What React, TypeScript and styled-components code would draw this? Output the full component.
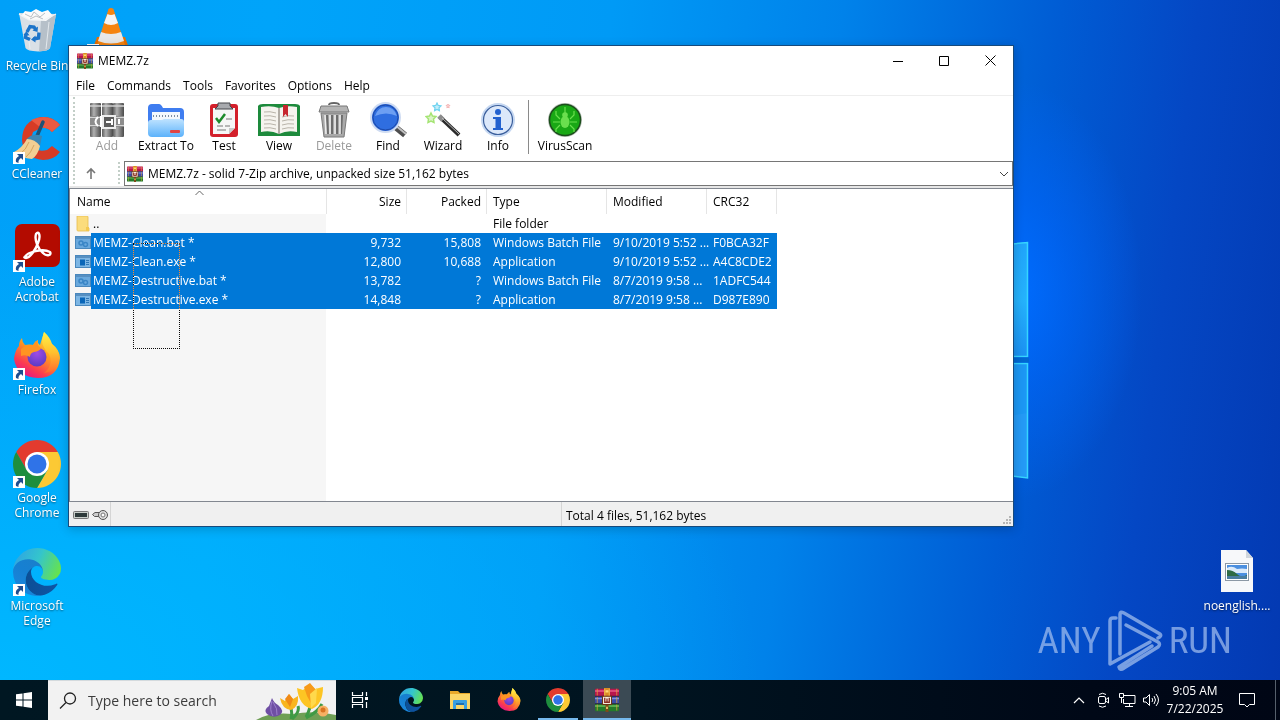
import React from "react";
import styled, { createGlobalStyle, css } from "styled-components";

const GlobalStyle = createGlobalStyle`
  * { box-sizing: border-box; }
  body { margin: 0; overflow: hidden; }
  body, button, input, select, table {
    font-family: "Open Sans", "Noto Sans", sans-serif;
    font-size: 12px;
    line-height: 15px;
    color: #000;
  }
  button { border: 0; padding: 0; background: none; cursor: default; }
  svg { display: block; flex: none; }
`;

/* ---------- Desktop ---------- */

const Screen = styled.div`
  height: 100vh;
  display: flex;
  flex-direction: column;
`;

const Desktop = styled.main`
  position: relative;
  flex: 1;
  min-height: 0;
  overflow: hidden;
  background:
    radial-gradient(ellipse 130px 210px at 1012px 290px, #006cff 0%, #0066faa0 45%, #0060f000 100%),
    radial-gradient(ellipse 760px 460px at 0 100%, #00b7ff 0%, #00b7ff00 100%),
    linear-gradient(97deg, #00a0f8 0%, #00a4fa 20%, #009af6 45%, #0082ea 62%, #005cd4 78%, #0447c4 88%, #0339b2 100%);
`;

const Wallpaper = styled.svg`
  position: absolute;
  left: 980px;
  top: 236px;
`;

const IconGrid = styled.div`
  display: grid;
  grid-auto-flow: column;
  grid-template-rows: repeat(6, 108px);
  grid-template-columns: 74px 74px;
  width: max-content;
  padding-top: 8px;
`;

const Shortcut = styled.button<{ $loose?: boolean }>`
  display: flex;
  flex-direction: column;
  align-items: center;
  gap: 2px;
  width: 74px;
  color: #fff;
  text-shadow: 0 1px 2px #0008;
  ${(p) => p.$loose && css`position: absolute; right: 6px; top: 548px;`}
`;

const ShortcutArt = styled.span`
  position: relative;
  display: block;
  width: 48px;
  height: 48px;
`;

const ArrowBadge = styled.svg`
  position: absolute;
  left: 0;
  bottom: 0;
`;

const Watermark = styled.div`
  position: absolute;
  right: 48px;
  bottom: 8px;
  display: flex;
  align-items: center;
  gap: 6px;
  color: #a9c4f0b0;
  font-family: "Roboto Condensed", Roboto, sans-serif;
  font-size: 37px;
  line-height: 62px;
`;

/* ---------- Window ---------- */

const Window = styled.section`
  position: absolute;
  left: 68px;
  top: 45px;
  width: 946px;
  height: 482px;
  display: flex;
  flex-direction: column;
  background: #fff;
  border: 1px solid #174a7c;
  box-shadow: 0 2px 10px #0003;
`;

const TitleBar = styled.header`
  display: flex;
  align-items: center;
  height: 29px;
  padding-left: 8px;
  gap: 5px;
`;

const Title = styled.h1`
  flex: 1;
  margin: 0;
  font-size: 12px;
  font-weight: 400;
`;

const CaptionButtons = styled.div`
  display: flex;
`;

const CaptionButton = styled.button`
  display: flex;
  align-items: center;
  justify-content: center;
  width: 46px;
  height: 29px;
`;

const MenuBar = styled.nav`
  display: flex;
  height: 21px;
  padding-left: 1px;
  border-bottom: 1px solid #eee;
`;

const MenuButton = styled.button`
  padding: 0 6px;
`;

const ToolRow = styled.div`
  display: flex;
  height: 64px;
`;

const Gripper = styled.span`
  width: 2px;
  margin: 1px 4px 0 4px;
  border-left: 2px dotted #c3cfc8;
`;

const ToolButton = styled.button<{ $width: number; $off?: boolean }>`
  display: flex;
  flex-direction: column;
  align-items: center;
  width: ${(p) => p.$width}px;
  padding-top: 6px;
  color: ${(p) => (p.$off ? "#9a9a9a" : "#000")};
  line-height: 16px;
`;

const ToolDivider = styled.span`
  width: 1px;
  margin: 4px 6px 6px 3px;
  background: #8a8a8a;
`;

const AddressRow = styled.div`
  display: flex;
  height: 28px;
  padding-top: 1px;
`;

const UpButton = styled.button`
  display: flex;
  align-items: center;
  justify-content: center;
  width: 24px;
  margin-right: 11px;
`;

const AddressBox = styled.label`
  position: relative;
  display: flex;
  flex: 1;
  align-items: center;
  gap: 5px;
  height: 25px;
  padding: 0 3px 0 2px;
  border: 1px solid #767676;
`;

const AddressSelect = styled.select`
  flex: 1;
  padding: 0;
  border: 0;
  background: none;
  appearance: none;
`;

const FileArea = styled.div`
  position: relative;
  flex: 1;
  min-height: 0;
  border-top: 1px solid #828790;
  border-bottom: 1px solid #828790;
  border-left: 1px solid #828790;
  background: linear-gradient(to right, #f6f6f6 256px, #fff 256px);
  box-shadow: 0 -2px 0 #e6e6e6;
`;

const HeaderBand = styled.div`
  height: 25px;
  margin-bottom: -25px;
  background: #fff;
`;

const FileTable = styled.table`
  position: relative;
  width: 707px;
  table-layout: fixed;
  border-spacing: 0;
`;

const HeadCell = styled.th<{ $width: number; $right?: boolean }>`
  position: relative;
  width: ${(p) => p.$width}px;
  height: 25px;
  padding: 0 5px 0 6px;
  border-right: 1px solid #e5e5e5;
  font-weight: 400;
  text-align: ${(p) => (p.$right ? "right" : "left")};
  &:first-child { padding-left: 7px; }
`;

const SortMark = styled.svg`
  position: absolute;
  left: 125px;
  top: 1px;
`;

const Row = styled.tr<{ $selected?: boolean }>`
  height: 19px;
  ${(p) =>
    p.$selected &&
    css`
      color: #fff;
      td:not(:first-child) { background: #0078d7; }
      td:first-child span { background: #0078d7; }
    `}
`;

const Cell = styled.td<{ $right?: boolean }>`
  padding: ${(p) => (p.$right ? "0 6px 0 0" : "0 0 0 6px")};
  white-space: nowrap;
  text-align: ${(p) => (p.$right ? "right" : "left")};
`;

const NameCell = styled.td`
  padding: 0;
`;

const NameBox = styled.div`
  display: flex;
  align-items: center;
  height: 19px;
  padding-left: 5px;
`;

const FileName = styled.span`
  flex: 1;
  padding-left: 2px;
  line-height: 19px;
`;

const Marquee = styled.div`
  position: absolute;
  left: 63px;
  top: 54px;
  width: 47px;
  height: 106px;
  border: 1px dotted #fff;
  mix-blend-mode: difference;
`;

const StatusBar = styled.footer`
  display: flex;
  height: 24px;
  background: #f0f0f0;
`;

const StatusPanel = styled.div<{ $width?: number }>`
  display: flex;
  align-items: center;
  gap: 3px;
  padding: 3px 4px 0;
  ${(p) => (p.$width ? css`width: ${p.$width}px; border-right: 1px solid #d5d5d5;` : css`flex: 1;`)}
`;

const SizeGrip = styled.svg`
  align-self: flex-end;
`;

/* ---------- Taskbar ---------- */

const Taskbar = styled.footer`
  display: flex;
  height: 40px;
  background: linear-gradient(to right, #001722 0%, #001420 50%, #000817 85%, #000615 100%);
`;

const TaskButton = styled.button<{ $state?: "open" | "active" }>`
  position: relative;
  display: flex;
  align-items: center;
  justify-content: center;
  width: 48px;
  height: 40px;
  margin-right: 1px;
  background: ${(p) => (p.$state === "active" ? "#3b4a54" : "none")};
  &::after {
    content: "";
    position: absolute;
    bottom: 0;
    left: ${(p) => (p.$state === "active" ? 0 : 4)}px;
    right: ${(p) => (p.$state === "active" ? 0 : 4)}px;
    height: ${(p) => (p.$state ? 2 : 0)}px;
    background: #76b9ed;
  }
`;

const StartButton = styled.button`
  display: flex;
  align-items: center;
  justify-content: center;
  width: 48px;
`;

const SearchBox = styled.label`
  display: flex;
  align-items: center;
  width: 288px;
  padding-left: 11px;
  gap: 11px;
  background: #f2f2f2;
  border-top: 1px solid #d4dadd;
`;

const SearchInput = styled.input`
  flex: 1;
  min-width: 0;
  padding: 0;
  border: 0;
  background: none;
  font-size: 14px;
  line-height: 20px;
  outline: 0;
  &::placeholder { color: #3c3c3c; opacity: 1; }
`;

const SearchArt = styled.svg`
  align-self: flex-end;
`;

const TaskList = styled.div`
  display: flex;
  flex: 1;
  & > :first-child { margin-right: 3px; }
`;

const Tray = styled.div`
  display: flex;
  align-items: center;
  color: #fff;
`;

const TrayButton = styled.button<{ $wide?: boolean }>`
  display: flex;
  align-items: center;
  justify-content: center;
  width: ${(p) => (p.$wide ? 42 : 24)}px;
  height: 40px;
  color: #fff;
`;

const Clock = styled.time`
  width: 60px;
  margin: 0 1px 0 2px;
  text-align: center;
  line-height: 18px;
  white-space: nowrap;
`;

const ShowDesktop = styled.button`
  width: 5px;
  height: 40px;
  margin-left: 7px;
  border-left: 1px solid #56606c;
`;

/* ---------- Drawings ---------- */

type Size = { size: number };

const Archive = ({ size }: Size) => (
  <svg width={size} height={size} viewBox="0 0 32 32">
    <rect x="0" y="1" width="32" height="10" rx="1" fill="#b8174c" />
    <rect x="0" y="3" width="32" height="2" fill="#e85a86" />
    <rect x="0" y="11" width="32" height="10" rx="1" fill="#3a4ba6" />
    <rect x="0" y="13" width="32" height="2" fill="#7f90e4" />
    <rect x="0" y="21" width="32" height="10" rx="1" fill="#237a2a" />
    <rect x="0" y="23" width="32" height="2" fill="#69bd59" />
    <path d="M0 11h32M0 21h32" stroke="#2a1832" strokeWidth="1" />
    <path d="M3 1v9M29 1v9M3 12v8M29 12v8M3 22v8M29 22v8" stroke="#e0a63a" strokeWidth="1.200" opacity=".8" />
    <rect x="12" y="0" width="8" height="20" fill="#d98a24" />
    <path d="M13 1v18M19 1v18" stroke="#f7c65c" strokeWidth="1" />
    <rect x="14" y="20" width="4" height="12" fill="#7d4a18" />
    <rect x="10" y="11" width="12" height="11" fill="#f8efdf" stroke="#6b3413" strokeWidth="1.400" />
    <path d="M13 13v6h6v-6M16 14v5" fill="none" stroke="#8a2d22" strokeWidth="1.800" />
    <path d="M14 3h4v3h-4zM15 25h2v3h-2z" fill="#ffd878" />
  </svg>
);

const Recycle = () => (
  <svg width="48" height="48" viewBox="0 0 48 48">
    <path d="M6 5 43 6 37 40Q36 43 25 43.500 14 43 12.500 40Z" fill="#d9e0e6" />
    <path d="M28 12 43 6 37 40Q35 43 26 43.500Z" fill="#b6c0c9" />
    <path d="M8 8 12 3 18 4 23 1 29 4 35 2 40 8 33 13 16 12Z" fill="#fafafa" />
    <path d="m12 6 6 3 3-5 6 5 5-4M17 11l6-3 7 3" fill="none" stroke="#b9bfc4" />
    <path d="M6 6 16 12 31 12 43 6" fill="none" stroke="#eef3f6" strokeWidth="1.200" />
    <path d="m14 17 3 24M36 14l-3 27" stroke="#eef2f5" strokeWidth="1" opacity=".8" />
    <g fill="none" stroke="#1c74c9" strokeWidth="3.400">
      <path d="M14 24 17 18.500 21 19 23 22" />
      <path d="M26 24.500 25.500 30 20.500 31" />
      <path d="M17 31.500 12.500 29.500 13 26" />
    </g>
    <path d="m25 18.500-.5 5.500-5-1.500zM22.500 27.500v7l-4.500-3zM10.500 27l3-4 3 4.500z" fill="#1c74c9" />
  </svg>
);

const Vlc = () => (
  <svg width="48" height="48" viewBox="0 0 48 48">
    <path d="M10 29h28l5 14H5Z" fill="#e96f00" />
    <path d="M21.500 1Q24-1 26.500 1L38 37Q24 43 10 37Z" fill="#f58410" />
    <path d="M20.500 6Q24 8 27.500 6L31 15Q24 19 17 15Z" fill="#f4f4f4" />
    <path d="M14 24Q24 28 34 24L37 33Q24 38 11 33Z" fill="#e8e8e8" />
  </svg>
);

const CCleaner = () => (
  <svg width="48" height="48" viewBox="0 0 48 48">
    <path d="M47 9 39 16Q34 11 28 12L20 16 18 23 20 32Q26 36 34 34L39 30 47 36Q41 44 30 44 10 42 9 24 9 5 28 1 40 0 47 9Z" fill="#d63b26" />
    <path d="M47 9 39 16Q34 11 28 12L18 4Q36-4 47 9Z" fill="#ea5a42" />
    <path d="M30 6 24 20" stroke="#1e5276" strokeWidth="3.500" strokeLinecap="round" />
    <path d="M13 24Q19 16 29 20L27 30 15 26Z" fill="#3a86b4" />
    <path d="M14 23Q22 23 27 30 25 39 19 43 8 42 1 36 9 32 14 23Z" fill="#f2cf93" />
    <path d="M16 26Q13 34 7 38M21 29Q18 37 13 41" stroke="#d6a55f" fill="none" />
  </svg>
);

const Acrobat = () => (
  <svg width="48" height="48" viewBox="0 0 48 48">
    <rect x="2" y="0" width="45" height="43" rx="7" fill="#b30b00" />
    <path d="M12 33C14 28 30 24 37 28 39 31 34 33 30 29 26 26 21 17 23 10 26 6 28 12 25 19 23 25 17 34 13 34 11 34 11 33 12 33Z" fill="none" stroke="#fff" strokeWidth="2.400" strokeLinejoin="round" />
  </svg>
);

const Firefox = ({ size }: Size) => (
  <svg width={size} height={size} viewBox="0 0 48 48">
    <defs>
      <linearGradient id="fxBody" x1=".8" y1=".1" x2=".25" y2="1">
        <stop offset="0" stopColor="#ffe23b" />
        <stop offset=".4" stopColor="#ff9a1f" />
        <stop offset=".75" stopColor="#fb3c50" />
        <stop offset="1" stopColor="#e5128a" />
      </linearGradient>
      <linearGradient id="fxTail" x1="0" y1="0" x2="0" y2="1">
        <stop offset="0" stopColor="#fff24a" />
        <stop offset=".5" stopColor="#ffc02d" />
        <stop offset="1" stopColor="#ff6a30" />
      </linearGradient>
      <radialGradient id="fxGlobe" cx=".5" cy=".3" r=".7">
        <stop offset="0" stopColor="#a04be6" />
        <stop offset="1" stopColor="#5a3bc4" />
      </radialGradient>
    </defs>
    <path d="M9 6Q9 10 12 13 16 12 20 13 22 9 25 8 24 11 27 13L31 0Q36 5 38 11 47 18 47 26 45 46 25 46 4 45 1 27 2 18 6 14 6 9 9 6Z" fill="url(#fxBody)" />
    <path d="M31 0Q37 5 39 12 48 20 46 29 42 41 31 41 41 33 36 22 29 15 29 8Z" fill="url(#fxTail)" />
    <circle cx="24" cy="25" r="9.500" fill="url(#fxGlobe)" />
    <path d="M8 17Q15 12 20 13 22 9 25 8 23 13 28 16 27 19 21 20 17 21 17 25 13 22 8 24Z" fill="#ff9422" />
  </svg>
);

const Chrome = ({ size }: Size) => (
  <svg width={size} height={size} viewBox="2 2 44 44">
    <path d="M4.950 13A22 22 0 0 1 43.050 13H24L14.470 29.500Z" fill="#e33b2e" />
    <path d="M43.050 13A22 22 0 0 1 24 46L33.530 29.500 24 13Z" fill="#fcc934" />
    <path d="M24 46A22 22 0 0 1 4.950 13L14.470 29.500 33.530 29.500Z" fill="#1e8e3e" />
    <circle cx="24" cy="24" r="11" fill="#fff" />
    <circle cx="24" cy="24" r="8.700" fill="#2f73e8" />
  </svg>
);

const Edge = ({ size }: Size) => (
  <svg width={size} height={size} viewBox="0 0 256 256">
    <defs>
      <linearGradient id="edgeDeep" x1="0" y1=".5" x2="1" y2=".5">
        <stop offset="0" stopColor="#0c4f96" />
        <stop offset="1" stopColor="#0f55a5" />
      </linearGradient>
      <linearGradient id="edgeMid" x1=".9" y1="0" x2=".3" y2="1">
        <stop offset="0" stopColor="#1b7fcb" />
        <stop offset=".5" stopColor="#1680d2" />
        <stop offset="1" stopColor="#1a86dc" />
      </linearGradient>
      <linearGradient id="edgeTop" x1="0" y1=".3" x2="1" y2=".6">
        <stop offset="0" stopColor="#2fa4e4" />
        <stop offset=".5" stopColor="#34c5cc" />
        <stop offset="1" stopColor="#66e24f" />
      </linearGradient>
    </defs>
    <g transform="translate(-4.630 -4.920)">
      <path fill="url(#edgeMid)" d="M110.340 246.340A79.200 79.200 0 0187.600 225a80.720 80.720 0 0129.530-120c3.120-1.470 8.450-4.130 15.540-4a32.350 32.350 0 0125.690 13 31.880 31.880 0 016.360 18.660c0-.21 24.460-79.600-80-79.600-43.900 0-80 41.660-80 78.210a130.150 130.150 0 0012.110 56 128 128 0 00156.380 67.110 75.550 75.550 0 01-62.780-8z" />
      <path fill="url(#edgeDeep)" d="M235.680 195.460a93.730 93.730 0 01-10.540 4.710 101.870 101.870 0 01-35.900 6.460c-47.320 0-88.540-32.550-88.540-74.320A31.480 31.480 0 01117.130 105A80.720 80.720 0 0087.600 225a79.200 79.200 0 0022.740 21.340c18 12 42 15 62.780 8l1.310-.44a128.340 128.340 0 0066.600-52.800 4 4 0 00-5.320-5.640z" />
      <path fill="url(#edgeTop)" d="M156.940 153.780c-.81 1.050-3.300 2.500-3.300 5.660 0 2.610 1.700 5.120 4.720 7.230 14.380 10 41.490 8.680 41.560 8.680a59.560 59.560 0 0030.270-8.350A61.380 61.380 0 00260.630 115c.26-22.410-8-37.310-11.340-43.910C228.090 29.760 182.350 4.920 132.610 4.920A128 128 0 004.630 131.200c.48-36.540 36.800-66.050 80-66.050 3.500 0 23.460.34 42 10.070 16.340 8.580 24.900 18.940 30.850 29.210 6.180 10.670 7.280 24.150 7.280 29.520s-2.740 13.330-7.800 19.830z" />
    </g>
  </svg>
);

const PictureFile = () => (
  <svg width="48" height="48" viewBox="0 0 48 48">
    <path d="M8 2h25l7 8v34H8Z" fill="#f7f8fa" />
    <path d="M33 2v8h7Z" fill="#cfd5dc" />
    <rect x="12.500" y="15.500" width="23" height="17" fill="#fff" stroke="#8c98a5" />
    <rect x="14" y="17" width="20" height="14" fill="#4b8fe0" />
    <path d="M14 20q5-3 10 1 5-1 10 0v4H14Z" fill="#dbeafa" />
    <path d="M14 22q6 0 10 4t10 1v2H14Z" fill="#2f6b45" />
    <path d="M14 28h20v3H14Z" fill="#4a7d9f" />
  </svg>
);

const LinkArrow = () => (
  <ArrowBadge width="12" height="12" viewBox="0 0 12 12">
    <rect width="12" height="12" fill="#fff" />
    <path d="M4 2h6v6L8 6Q5 8 5.500 11L3 10Q2 6 6 4Z" fill="#1f4e8f" />
  </ArrowBadge>
);

const AddIcon = () => (
  <svg width="36" height="36" viewBox="0 0 36 36">
    <defs>
      <linearGradient id="book" x1="0" y1="0" x2="1" y2="0">
        <stop offset="0" stopColor="#5d5d5d" />
        <stop offset=".35" stopColor="#b0b0b0" />
        <stop offset="1" stopColor="#4a4a4a" />
      </linearGradient>
    </defs>
    {[1, 13, 24].map((x) => (
      <g key={x}>
        <rect x={x} y="1" width="11" height="34" rx="1" fill="url(#book)" />
        <path d={`M${x} 4h11`} stroke="#d0d0d0" strokeWidth="1.500" />
      </g>
    ))}
    <rect x="1" y="14" width="34" height="11" fill="#8d8d8d" />
    <path d="M1 15.500h34M1 23.500h34" stroke="#d4d4d4" />
    <rect x="14" y="14" width="12" height="12" fill="#5d5d5d" stroke="#eee" strokeWidth="2" />
    <path d="M9 15q-5 5 0 9M12 14v11M17 20h6M23 17v6M30 17v5" stroke="#fff" strokeWidth="2" fill="none" />
  </svg>
);

const ExtractIcon = () => (
  <svg width="38" height="36" viewBox="0 0 38 36">
    <defs>
      <linearGradient id="folder" x1="0" y1="0" x2="0" y2="1">
        <stop offset="0" stopColor="#bfe3ff" />
        <stop offset="1" stopColor="#5cb2fb" />
      </linearGradient>
    </defs>
    <path d="M1 6q0-4 4-4h7q2 0 4 4h17q4 0 4 4v14H1Z" fill="#3f7df0" />
    <path d="M5 10h28v10H5Z" fill="#f4f8fd" />
    <path d="M6 14h26" stroke="#7e8da1" strokeWidth="2" strokeDasharray="1 2" />
    <path d="M1 21q0-3 3-3h10q2 0 3-1h17q3 0 3 3v11q0 4-4 4H5q-4 0-4-4Z" fill="url(#folder)" />
    <rect x="23" y="28" width="10" height="3" rx="1" fill="#e04444" />
  </svg>
);

const TestIcon = () => (
  <svg width="36" height="36" viewBox="0 0 36 36">
    <rect x="4" y="2" width="28" height="33" rx="3" fill="#d3202b" />
    <path d="M7 6h22v20l-6 6H7Z" fill="#f6f6f6" />
    <path d="m29 26-6 6v-6z" fill="#c9c9c9" />
    <path d="M12 1h12v3l3 3H9l3-3Z" fill="#a8aaae" stroke="#44474b" strokeWidth="1" />
    <path d="m10 16 3 4 6-8" fill="none" stroke="#1c8a2b" strokeWidth="2.500" />
    <path d="M20 17h6M11 24h6M19 24h5M11 28h9" stroke="#777" strokeWidth="1.200" />
  </svg>
);

const ViewIcon = () => (
  <svg width="44" height="36" viewBox="0 0 44 36">
    <path d="M1 4q1-2 5-2h32q4 0 5 2v30H1Z" fill="#1d8a3c" />
    <path d="M4 5q10-2 18 1 8-3 18-1v25q-10-2-18 2-8-4-18-2Z" fill="#f5f3ee" />
    <path d="M22 6v26" stroke="#9a958c" strokeWidth="1.500" />
    <path d="M7 10q6-1 12 1M7 14q6-1 12 1M7 18q6-1 12 1M7 22q6-1 12 1M7 26q6-1 12 1M25 15q6-2 12-1M25 19q6-2 12-1M25 23q6-2 12-1M25 27q6-2 12-1" stroke="#b9b4aa" fill="none" />
    <path d="M26 3h5v12l-2.500-3-2.500 3Z" fill="#c6262e" />
  </svg>
);

const DeleteIcon = () => (
  <svg width="36" height="36" viewBox="0 0 36 36">
    <path d="M13 3q0-2 5-2t5 2" fill="none" stroke="#666" strokeWidth="2" />
    <path d="M5 4h26l2 6H3Z" fill="#b4b4b4" stroke="#777" />
    <path d="M5 11h26l-3 24H8Z" fill="#a9a9a9" stroke="#7a7a7a" />
    <path d="m11 13 1 19M16 13v19M21 13v19M26 13l-1 19" stroke="#6d6d6d" strokeWidth="2" />
    <path d="m9 13 1 19M14 13v19M19 13v19M24 13v19" stroke="#efefef" strokeWidth="1.500" />
  </svg>
);

const FindIcon = () => (
  <svg width="38" height="36" viewBox="0 0 38 36">
    <path d="m25 24 11 9" stroke="#4e4e4e" strokeWidth="6" />
    <path d="m26 23 11 9" stroke="#c1c1c1" strokeWidth="2" />
    <circle cx="16.500" cy="15.500" r="14.500" fill="#2c66d8" stroke="#cfdcf2" strokeWidth="2" />
    <circle cx="16.500" cy="15.500" r="12.500" fill="#2f6ee0" stroke="#1d4aa8" />
    <path d="M6 14q3-9 11-9t11 9q-11-5-22 0Z" fill="#6d9ff2" />
  </svg>
);

const Star = ({ x, y, r, color }: { x: number; y: number; r: number; color: string }) => (
  <path
    d="M0-10 3-4 10-3 5 2 6 9 0 6-6 9-5 2-10-3-3-4Z"
    transform={`translate(${x} ${y}) scale(${r / 10})`}
    fill={color}
    fillOpacity=".4"
    stroke={color}
    strokeWidth="3"
  />
);

const WizardIcon = () => (
  <svg width="36" height="36" viewBox="0 0 36 36">
    <path d="m15 15 19 18" stroke="#2b2b2b" strokeWidth="4" />
    <path d="m14 14 4 4" stroke="#8c8c8c" strokeWidth="5" />
    <path d="m17 16 17 16" stroke="#b8b8b8" strokeWidth="1" />
    <Star x={12} y={5} r={4} color="#6fd3f0" />
    <Star x={6} y={16} r={5} color="#a5e474" />
    <Star x={23} y={4} r={2} color="#f09a9a" />
  </svg>
);

const InfoIcon = () => (
  <svg width="36" height="36" viewBox="0 0 36 36">
    <circle cx="18" cy="18" r="17" fill="#c6d8f2" />
    <circle cx="18" cy="18" r="14.500" fill="#dce8fa" stroke="#3b5f9c" strokeWidth="1.200" />
    <circle cx="18" cy="10" r="3" fill="#2361cf" />
    <path d="M13 15h8v11h2v2H13v-2h2.500v-9H13Z" fill="#2361cf" />
  </svg>
);

const VirusIcon = () => (
  <svg width="36" height="36" viewBox="0 0 36 36">
    <circle cx="18" cy="18" r="17" fill="#b7bfb7" />
    <circle cx="18" cy="18" r="15.500" fill="#19a815" stroke="#1b4d1b" strokeWidth="1.500" />
    <g stroke="#6adf4e" fill="none" strokeWidth="1.200">
      <path d="M18 14V5M13 17l-4-4V9M23 17l4-4V9M13 20H6M23 20h7M13 23l-4 4v3M23 23l4 4v3" />
    </g>
    <ellipse cx="18" cy="20" rx="4.500" ry="6" fill="#6adf4e" />
    <circle cx="18" cy="13" r="2.800" fill="#6adf4e" />
  </svg>
);

const FolderGlyph = () => (
  <svg width="16" height="16" viewBox="0 0 16 16">
    <path d="M2 0h10q1 0 1 1v10l1 1v3H3q-1 0-1-1Z" fill="#fbdc7c" stroke="#e9bd4c" strokeWidth=".8" />
    <path d="M11 11h3v4h-3z" fill="#f3c84f" />
  </svg>
);

const BatchGlyph = () => (
  <svg width="16" height="14" viewBox="0 0 16 14">
    <rect x=".5" y=".5" width="15" height="12" fill="#6aa9dd" stroke="#4a88bd" />
    <path d="M1 2h14" stroke="#5790c2" strokeWidth="2" />
    <circle cx="6" cy="7" r="2" fill="none" stroke="#3a86c6" strokeWidth="1.500" />
    <circle cx="10.500" cy="8.500" r="2" fill="none" stroke="#3a86c6" strokeWidth="1.500" />
  </svg>
);

const ExeGlyph = () => (
  <svg width="16" height="14" viewBox="0 0 16 14">
    <rect x=".5" y=".5" width="15" height="12" fill="#7db6e4" stroke="#4a88bd" />
    <path d="M1 2h14" stroke="#5790c2" strokeWidth="2" />
    <path d="M5 4.500h5v6H5z" fill="#0a66b8" />
    <path d="M11 5.500h3M11 7.500h3M11 9.500h3" stroke="#2f78b8" />
  </svg>
);

const RunMark = () => (
  <svg width="56" height="62" viewBox="0 0 56 62">
    <g fill="none" stroke="#a9c4f0" strokeOpacity=".7" strokeWidth="3.500" strokeLinejoin="round" strokeLinecap="round">
      <path d="M9 8H6Q3 8 3 11V54L43 32" />
      <path d="M13 44V4Q13 1 17 3L53 24Q55 26 51 28" />
      <path d="M19 15 51 32Q54 34 51 37L17 58Q13 61 12 57L45 36" />
    </g>
  </svg>
);

/* ---------- Data ---------- */

const shortcuts = [
  { label: "Recycle Bin", art: <Recycle />, link: false },
  { label: "CCleaner", art: <CCleaner />, link: true },
  { label: "Adobe Acrobat", art: <Acrobat />, link: true },
  { label: "Firefox", art: <Firefox size={48} />, link: true },
  { label: "Google Chrome", art: <Chrome size={48} />, link: true },
  { label: "Microsoft Edge", art: <Edge size={48} />, link: true },
];

const menus = ["File", "Commands", "Tools", "Favorites", "Options", "Help"];

const tools = [
  { label: "Add", width: 56, icon: <AddIcon />, off: true },
  { label: "Extract To", width: 62, icon: <ExtractIcon /> },
  { label: "Test", width: 54, icon: <TestIcon /> },
  { label: "View", width: 56, icon: <ViewIcon /> },
  { label: "Delete", width: 54, icon: <DeleteIcon />, off: true },
  { label: "Find", width: 54, icon: <FindIcon /> },
  { label: "Wizard", width: 56, icon: <WizardIcon /> },
  { label: "Info", width: 54, icon: <InfoIcon /> },
];

const files = [
  { name: "MEMZ-Clean.bat *", size: "9,732", packed: "15,808", type: "Windows Batch File", modified: "9/10/2019 5:52 ...", crc: "F0BCA32F" },
  { name: "MEMZ-Clean.exe *", size: "12,800", packed: "10,688", type: "Application", modified: "9/10/2019 5:52 ...", crc: "A4C8CDE2" },
  { name: "MEMZ-Destructive.bat *", size: "13,782", packed: "?", type: "Windows Batch File", modified: "8/7/2019 9:58 ...", crc: "1ADFC544" },
  { name: "MEMZ-Destructive.exe *", size: "14,848", packed: "?", type: "Application", modified: "8/7/2019 9:58 ...", crc: "D987E890" },
];

const ArchiveWindow = () => (
  <Window aria-label="MEMZ.7z">
    <TitleBar>
      <Archive size={16} />
      <Title>MEMZ.7z</Title>
      <CaptionButtons>
        <CaptionButton aria-label="Minimize">
          <svg width="10" height="10"><path d="M0 5.500h10" stroke="#000" /></svg>
        </CaptionButton>
        <CaptionButton aria-label="Maximize">
          <svg width="10" height="10"><path d="M.5.5h9v9h-9z" fill="none" stroke="#000" /></svg>
        </CaptionButton>
        <CaptionButton aria-label="Close">
          <svg width="11" height="11"><path d="m.5.5 10 10M10.500.5l-10 10" stroke="#000" /></svg>
        </CaptionButton>
      </CaptionButtons>
    </TitleBar>
    <MenuBar>
      {menus.map((m) => <MenuButton key={m}>{m}</MenuButton>)}
    </MenuBar>
    <ToolRow>
      <Gripper />
      {tools.map((t) => (
        <ToolButton key={t.label} $width={t.width} $off={t.off} disabled={t.off}>
          {t.icon}
          {t.label}
        </ToolButton>
      ))}
      <ToolDivider />
      <ToolButton $width={60}>
        <VirusIcon />
        VirusScan
      </ToolButton>
    </ToolRow>
    <AddressRow>
      <Gripper />
      <UpButton aria-label="Up one level">
        <svg width="12" height="16" viewBox="0 0 12 16">
          <path d="M6 12V2M2 6l4-4 4 4" fill="none" stroke="#777" strokeWidth="1.600" />
        </svg>
      </UpButton>
      <Gripper />
      <AddressBox>
        <Archive size={16} />
        <AddressSelect aria-label="Location">
          <option>MEMZ.7z - solid 7-Zip archive, unpacked size 51,162 bytes</option>
        </AddressSelect>
        <svg width="10" height="6" viewBox="0 0 10 6">
          <path d="m1 1 4 4 4-4" fill="none" stroke="#444" />
        </svg>
      </AddressBox>
    </AddressRow>
    <FileArea>
      <HeaderBand />
      <FileTable>
        <thead>
          <tr>
            <HeadCell $width={257}>
              Name
              <SortMark width="9" height="6" viewBox="0 0 9 6">
                <path d="m.5 5 4-4 4 4" fill="none" stroke="#666" />
              </SortMark>
            </HeadCell>
            <HeadCell $width={80} $right>Size</HeadCell>
            <HeadCell $width={80} $right>Packed</HeadCell>
            <HeadCell $width={120}>Type</HeadCell>
            <HeadCell $width={100}>Modified</HeadCell>
            <HeadCell $width={70}>CRC32</HeadCell>
          </tr>
        </thead>
        <tbody>
          <Row>
            <NameCell>
              <NameBox>
                <FolderGlyph />
                <FileName>..</FileName>
              </NameBox>
            </NameCell>
            <Cell />
            <Cell />
            <Cell>File folder</Cell>
            <Cell />
            <Cell />
          </Row>
          {files.map((f) => (
            <Row key={f.name} $selected>
              <NameCell>
                <NameBox>
                  {f.name.includes(".bat") ? <BatchGlyph /> : <ExeGlyph />}
                  <FileName>{f.name}</FileName>
                </NameBox>
              </NameCell>
              <Cell $right>{f.size}</Cell>
              <Cell $right>{f.packed}</Cell>
              <Cell>{f.type}</Cell>
              <Cell>{f.modified}</Cell>
              <Cell>{f.crc}</Cell>
            </Row>
          ))}
        </tbody>
      </FileTable>
      <Marquee />
    </FileArea>
    <StatusBar>
      <StatusPanel $width={42}>
        <svg width="16" height="10" viewBox="0 0 16 10">
          <rect x=".5" y=".5" width="15" height="7" rx="1" fill="#c9cec9" stroke="#777" />
          <rect x="2" y="2" width="12" height="4" fill="#2e3a3a" />
        </svg>
        <svg width="16" height="14" viewBox="0 0 16 14">
          <path d="M8 3.500H3L.5 5.500l2 2H8" fill="#ccc" stroke="#555" />
          <circle cx="11" cy="6" r="4.500" fill="#ddd" stroke="#555" />
          <circle cx="11" cy="6" r="2" fill="#fff" stroke="#777" />
        </svg>
      </StatusPanel>
      <StatusPanel $width={451} />
      <StatusPanel>Total 4 files, 51,162 bytes</StatusPanel>
      <SizeGrip width="12" height="12" viewBox="0 0 12 12">
        <path d="M8 2h2v2H8zM8 5h2v2H8zM5 5h2v2H5zM8 8h2v2H8zM5 8h2v2H5zM2 8h2v2H2z" fill="#b5b5b5" />
      </SizeGrip>
    </StatusBar>
  </Window>
);

export default function App() {
  return (
    <Screen>
      <GlobalStyle />
      <Desktop>
        <Wallpaper width="60" height="250" viewBox="0 0 60 250">
          <defs>
            <linearGradient id="pane" x1="0" y1="0" x2="0" y2="1">
              <stop offset="0" stopColor="#20a4fb" />
              <stop offset=".5" stopColor="#25b2fc" />
              <stop offset="1" stopColor="#1b90f2" />
            </linearGradient>
          </defs>
          <path d="M0 11 48 6V121H0Z" fill="url(#pane)" />
          <path d="M0 127H48V242L0 236Z" fill="#249af6" />
          <path d="M0 127H48V177L0 184Z" fill="#1c97f4" />
          <path d="M0 11 47.500 6.500V120.500H0M0 127.500H47.500V242L0 236" fill="none" stroke="#35d5ff" strokeWidth="1.500" />
          <path d="M0 124H49" stroke="#0068d2" strokeWidth="5" />
        </Wallpaper>
        <IconGrid>
          {shortcuts.map((s) => (
            <Shortcut key={s.label}>
              <ShortcutArt>
                {s.art}
                {s.link && <LinkArrow />}
              </ShortcutArt>
              {s.label}
            </Shortcut>
          ))}
          <Shortcut aria-label="VLC">
            <ShortcutArt>
              <Vlc />
              <LinkArrow />
            </ShortcutArt>
          </Shortcut>
        </IconGrid>
        <Shortcut $loose>
          <ShortcutArt><PictureFile /></ShortcutArt>
          noenglish....
        </Shortcut>
        <Watermark>
          ANY
          <RunMark />
          RUN
        </Watermark>
        <ArchiveWindow />
      </Desktop>
      <Taskbar>
        <StartButton aria-label="Start">
          <svg width="16" height="16" viewBox="0 0 16 16">
            <path d="M0 2.300 6.500 1.400V7.500H0ZM7.500 1.200 16 0V7.500H7.500ZM0 8.500H6.500V14.600L0 13.700ZM7.500 8.500H16V16L7.500 14.800Z" fill="#fff" />
          </svg>
        </StartButton>
        <SearchBox>
          <svg width="18" height="18" viewBox="0 0 18 18">
            <circle cx="11" cy="6.500" r="5.500" fill="none" stroke="#222" strokeWidth="1.300" />
            <path d="m7 10.500-6 6" stroke="#222" strokeWidth="1.300" />
          </svg>
          <SearchInput aria-label="Search" placeholder="Type here to search" />
          <SearchArt width="80" height="38" viewBox="0 0 80 38">
            <path d="M0 38Q14 30 36 32 60 28 80 33V38Z" fill="#6f9f55" />
            <path d="M35 37Q37 28 33 20M50 35Q56 24 55 14M50 36Q62 30 66 22M36 37Q44 30 42 24" stroke="#3f9a45" strokeWidth="3" fill="none" />
            <path d="M16 16Q18 21 22 23 29 29 24 33 17 37 11 32 7 28 13 24Z" fill="#6f4fa4" />
            <path d="M16 19Q13 28 17 34M17 20Q22 27 21 33" stroke="#9c7fcb" fill="none" />
            <path d="M24 16 29 19 33 12 37 17 42 14Q43 25 35 28 26 27 24 16Z" fill="#f9b51e" />
            <path d="M29 17 33 12 37 17 34 25Z" fill="#f08a16" />
            <path d="M41 6 47 8 54 2 59 7 67 5Q67 22 56 27 43 24 41 6Z" fill="#fdc524" />
            <path d="M48 5 54 1 60 8 56 23 51 14Z" fill="#f79a1a" />
            <path d="M54 12 61 6 60 21 55 26Z" fill="#ffd94c" />
            <circle cx="67" cy="29" r="5.500" fill="#f6b064" />
            <circle cx="67" cy="28" r="2.500" fill="#d97422" />
          </SearchArt>
        </SearchBox>
        <TaskList>
          <TaskButton aria-label="Task View">
            <svg width="18" height="18" viewBox="0 0 18 18" fill="none" stroke="#fff" strokeWidth="1.200">
              <path d="M1.500 1v3.500h10V1M1.500 17v-3.500h10V17M1.500 6.500h10v5h-10zM15.500 1v4M15.500 11v6" />
              <path d="M14 6h3v3h-3z" fill="#fff" stroke="none" />
            </svg>
          </TaskButton>
          <TaskButton aria-label="Microsoft Edge"><Edge size={24} /></TaskButton>
          <TaskButton aria-label="File Explorer">
            <svg width="24" height="24" viewBox="0 0 24 24">
              <path d="M2 3h8l2 2h10v16H2Z" fill="#e9a92b" />
              <path d="M2 6h20v15H2Z" fill="#fcd667" />
              <path d="M5 21v-8q0-1 1-1h12q1 0 1 1v8h-3v-4H8v4Z" fill="#3a9fe0" />
              <path d="M8 15h8v2H8z" fill="#1f6fae" />
            </svg>
          </TaskButton>
          <TaskButton aria-label="Firefox"><Firefox size={24} /></TaskButton>
          <TaskButton aria-label="Google Chrome" $state="open"><Chrome size={24} /></TaskButton>
          <TaskButton aria-label="WinRAR" $state="active"><Archive size={24} /></TaskButton>
        </TaskList>
        <Tray>
          <TrayButton aria-label="Show hidden icons">
            <svg width="12" height="7" viewBox="0 0 12 7"><path d="m1 6 5-5 5 5" fill="none" stroke="#fff" strokeWidth="1.200" /></svg>
          </TrayButton>
          <TrayButton aria-label="Meet now">
            <svg width="14" height="16" viewBox="0 0 14 16" fill="none" stroke="#fff">
              <rect x="2.500" y="4.500" width="7" height="7" rx="1.500" />
              <path d="m10 7.500 2.500-2v5.500l-2.500-2M3 2.500q3.500-2.500 7 0M3 14q3.500 2.500 7 0" />
            </svg>
          </TrayButton>
          <TrayButton aria-label="Network">
            <svg width="17" height="15" viewBox="0 0 17 15" fill="none" stroke="#fff">
              <path d="M5 2.500h11v8H4.500V6M10.500 11v3M6 13.500h8" />
              <path d="M.5.500h4v4h-4zM2.500 5v5" />
            </svg>
          </TrayButton>
          <TrayButton aria-label="Volume">
            <svg width="17" height="14" viewBox="0 0 17 14" fill="none" stroke="#fff">
              <path d="M.5 5v4H3l3.500 3.500v-11L3 5ZM9 5q1.500 2 0 4M11 3q3 4 0 8M13 1q5 6 0 12" />
            </svg>
          </TrayButton>
          <Clock>9:05 AM<br />7/22/2025</Clock>
          <TrayButton aria-label="Notifications" $wide>
            <svg width="16" height="16" viewBox="0 0 16 16"><path d="M.5 1.500h15v11h-5L8 15l-2.500-2.500h-5Z" fill="none" stroke="#fff" /></svg>
          </TrayButton>
          <ShowDesktop aria-label="Show desktop" />
        </Tray>
      </Taskbar>
    </Screen>
  );
}
